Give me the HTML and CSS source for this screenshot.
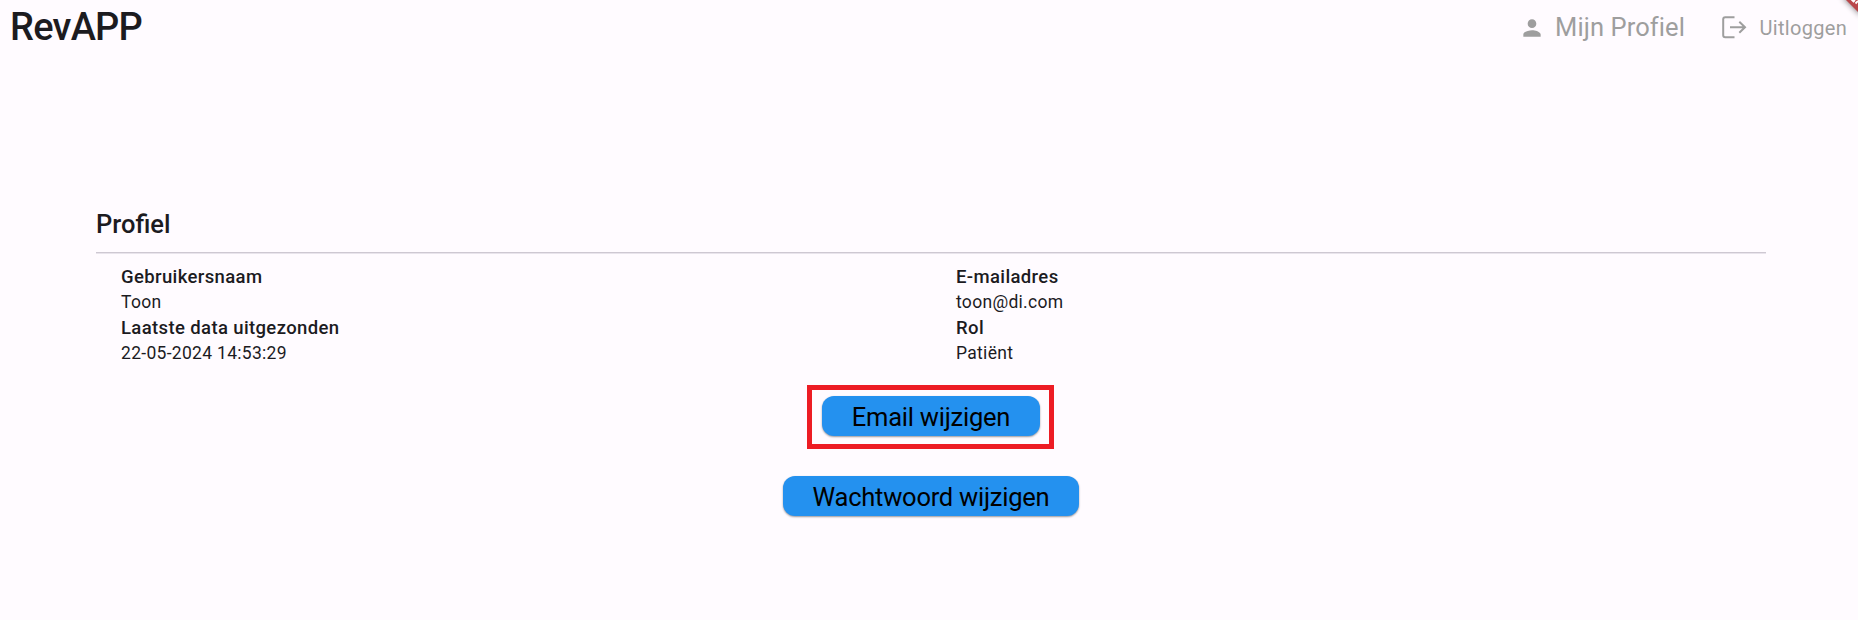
FILE: index.html
```html
<!DOCTYPE html>
<html lang="nl">
<head>
<meta charset="utf-8">
<title>RevAPP</title>
<link rel="stylesheet" href="styles.css">
</head>
<body>
<header class="topbar">
  <h1 class="brand">RevAPP</h1>
  <nav class="nav">
    <a class="nav-item nav-profile">
      <svg class="icon-person" viewBox="0 0 24 24"><path d="M12 12c2.21 0 4-1.79 4-4s-1.79-4-4-4-4 1.790-4 4 1.790 4 4 4zm0 2c-2.670 0-8 1.340-8 4v2h16v-2c0-2.660-5.330-4-8-4z"/></svg>
      <span>Mijn Profiel</span>
    </a>
    <a class="nav-item nav-logout">
      <svg class="icon-logout" viewBox="0 0 25 23"><path d="M12.500 1.200H3.200Q1.200 1.200 1.200 3.200V19.300Q1.200 21.300 3.200 21.300H12.500M8 11.300H22.500M17.300 5.800L23 11.300L17.300 16.800"/></svg>
      <span>Uitloggen</span>
    </a>
  </nav>
  <svg class="ribbon" viewBox="0 0 24 26"><path class="ribbon-shadow" d="M8-4L28 16V-4Z"/><path class="ribbon-band" d="M10-2L26 14V-2Z"/><path class="ribbon-mark" d="M17-1L19.500 1.500L21 0M21.500 3.500L24 1"/></svg>
</header>
<main class="profile">
  <h2 class="profile-title">Profiel</h2>
  <div class="details">
    <dl class="column">
      <dt>Gebruikersnaam</dt><dd>Toon</dd>
      <dt>Laatste data uitgezonden</dt><dd>22-05-2024 14:53:29</dd>
    </dl>
    <dl class="column">
      <dt>E-mailadres</dt><dd>toon@di.com</dd>
      <dt>Rol</dt><dd>Patiënt</dd>
    </dl>
  </div>
  <div class="actions">
    <div class="highlight"><button class="button button-email">Email wijzigen</button></div>
    <button class="button button-password">Wachtwoord wijzigen</button>
  </div>
</main>
</body>
</html>
```
FILE: styles.css
```css
* { box-sizing: border-box; }
body {
  margin: 0;
  height: 620px;
  overflow: hidden;
  background: #fffbff;
  color: #1c1b1f;
  font-family: Roboto, "Liberation Sans", sans-serif;
}
.topbar {
  position: relative;
  display: flex;
  justify-content: space-between;
  height: 56px;
  padding: 0 11px 0 10px;
}
.brand {
  margin: 0;
  font-size: 38px;
  font-weight: 500;
  letter-spacing: -.75px;
  line-height: 55px;
}
.nav { display: flex; gap: 37px; color: #9e9e9e; }
.nav-item { display: flex; align-items: center; height: 55px; white-space: nowrap; }
.nav-profile { gap: 10px; font-size: 25.500px; letter-spacing: .1px; }
.nav-profile span { padding-bottom: 2px; }
.nav-logout { gap: 12.500px; font-size: 20px; letter-spacing: .3px; }
.icon-person { width: 26px; height: 26px; fill: #9e9e9e; }
.icon-logout { width: 25px; height: 23px; fill: none; stroke: #9e9e9e; stroke-width: 2; }
.ribbon { position: absolute; top: 0; right: 0; width: 24px; height: 26px; }
.ribbon-shadow { fill: #000; opacity: .55; filter: blur(3px); }
.ribbon-band { fill: #b9474b; }
.ribbon-mark { fill: none; stroke: #fff; stroke-width: 1.800; }
.profile { padding: 152px 92px 0 96px; }
.profile-title {
  margin: 0;
  height: 44px;
  font-size: 25.500px;
  font-weight: 500;
  line-height: 32px;
}
.details {
  display: grid;
  grid-template-columns: 1fr 1fr;
  padding-top: 12px;
  border-top: 1px solid #cec8d2;
  box-shadow: inset 0 1px #e9e4ec;
}
.column { margin: 0; padding-left: 25px; line-height: 25.400px; }
.column dt { font-size: 18.500px; font-weight: 500; letter-spacing: .37px; }
.column dd { margin: 0; font-size: 17.500px; letter-spacing: .3px; }
.actions {
  display: flex;
  flex-direction: column;
  align-items: center;
  gap: 27.500px;
  padding: 18px 1px 0 0;
}
.highlight { width: 247px; height: 64px; padding: 6.500px 9.500px; border: 5px solid #ed1c24; }
.button {
  display: block;
  height: 40px;
  padding: 1px 0 0 1px;
  border: 0;
  border-radius: 12px;
  background: #2491ef;
  box-shadow: 0 1px 2px rgba(0, 0, 0, .4);
  color: #000;
  font-family: inherit;
  font-size: 25.500px;
  letter-spacing: -.24px;
  line-height: 39px;
}
.button { padding-top: 2px; line-height: 38px; }
.button-email { width: 218px; }
.button-password { width: 296px; }
```
